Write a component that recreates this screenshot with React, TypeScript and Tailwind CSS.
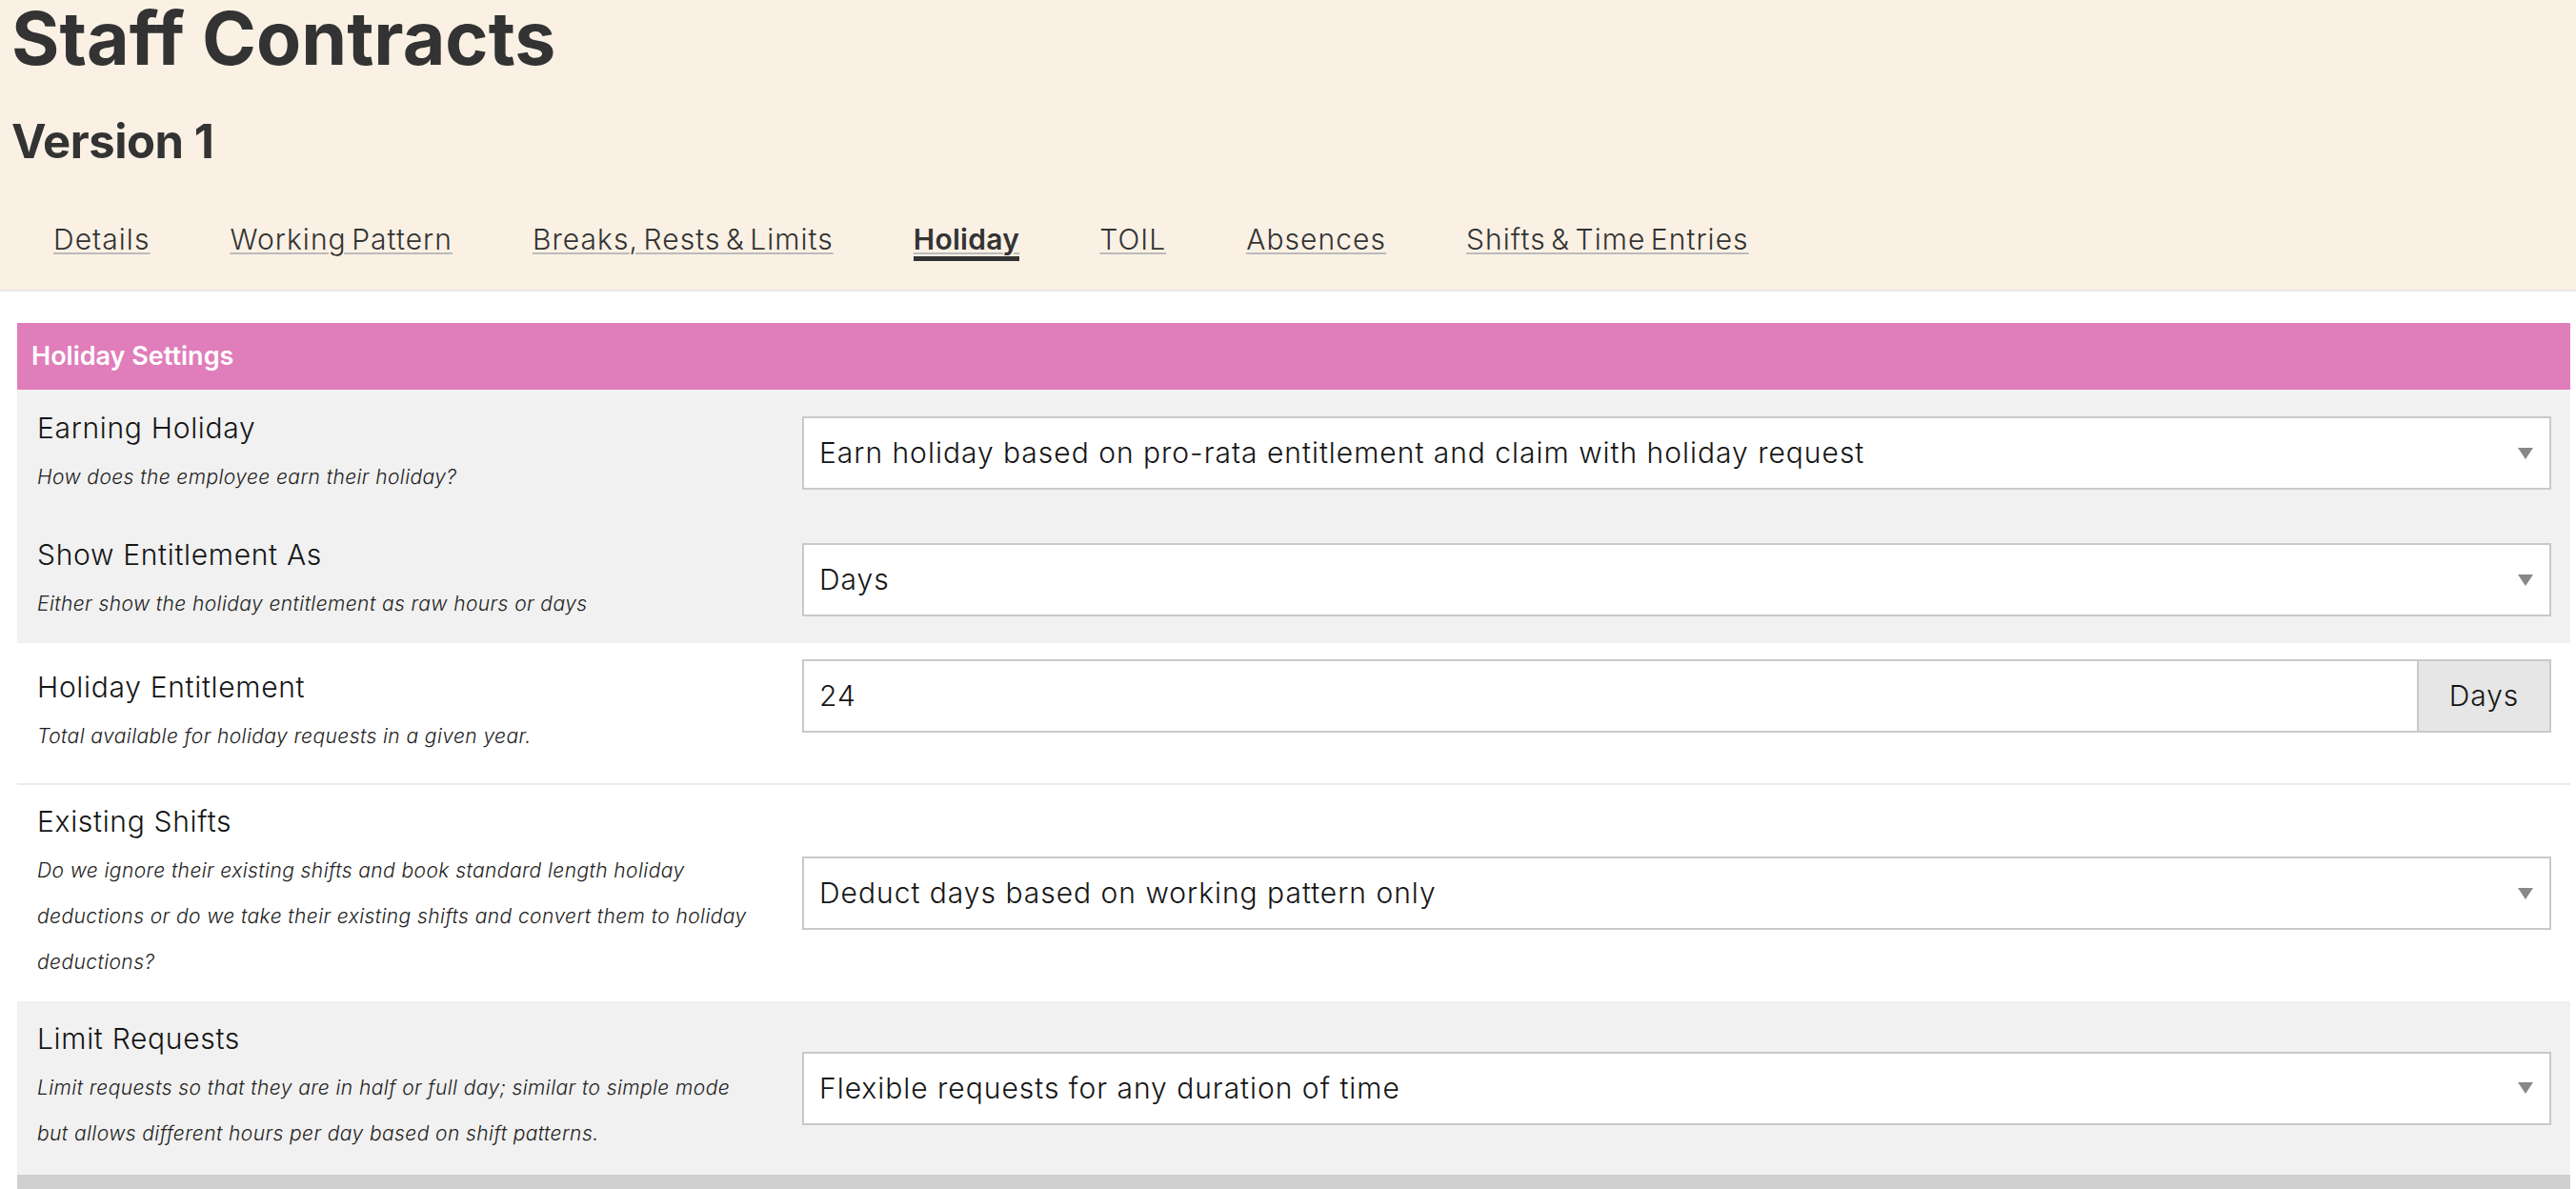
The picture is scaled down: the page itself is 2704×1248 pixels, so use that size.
import React from "react";

const tabs = [
  "Details",
  "Working Pattern",
  "Breaks, Rests & Limits",
  "Holiday",
  "TOIL",
  "Absences",
  "Shifts & Time Entries",
];

function Caret() {
  return (
    <svg width="16" height="12" viewBox="0 0 16 12" className="shrink-0">
      <path d="M0 0h16L8 12z" fill="#888" />
    </svg>
  );
}

function SelectBox({ value }: { value: string }) {
  return (
    <div className="flex h-[77px] w-full items-center justify-between border-2 border-[#c9c9c9] bg-white pl-[16px] pr-[17px] text-[30px] font-light tracking-[0.033em] text-[#151515]">
      <span>{value}</span>
      <Caret />
    </div>
  );
}

function FieldLabel({
  title,
  lines,
  className = "",
}: {
  title: string;
  lines: string[];
  className?: string;
}) {
  return (
    <div className={`w-[803px] shrink-0 ${className}`}>
      <div className="text-[30px] font-light leading-[40px] tracking-[0.023em] text-[#151515]">
        {title}
      </div>
      <div className="mt-[8px] text-[21px] font-light italic leading-[48px] tracking-[0.02em] text-[#222]">
        {lines.map((line) => (
          <div key={line} className="whitespace-nowrap">
            {line}
          </div>
        ))}
      </div>
    </div>
  );
}

export default function App() {
  return (
    <div className="min-h-screen bg-white font-['Inter',_sans-serif] text-[#333]">
      <header className="border-b-2 border-[#e8e8e8] bg-[#faf1e4] px-[12px] pb-[33px]">
        <h1 className="text-[77px] font-bold leading-[80px]">Staff Contracts</h1>
        <h2 className="mt-[40px] text-[49px] font-bold leading-[58px] tracking-[-0.01em]">
          Version 1
        </h2>
        <nav className="mt-[53px] ml-[2px] flex">
          {tabs.map((tab) => (
            <a
              key={tab}
              href="#"
              className="px-[42px] text-[30px] leading-[40px]"
            >
              <span
                className={
                  tab === "Holiday"
                    ? "border-b-[5px] border-[#333] font-semibold tracking-[0.01em] text-[#333] underline decoration-[#bbb] decoration-2 underline-offset-[3px]"
                    : "font-light tracking-[0.035em] [word-spacing:-4px] text-[#333] underline decoration-[#bbb] decoration-2 underline-offset-[3px]"
                }
              >
                {tab}
              </span>
            </a>
          ))}
        </nav>
      </header>

      <section className="ml-[18px] mr-[6px] mt-[33px]">
        <div className="flex h-[70px] items-center bg-[#e07dbb] px-[15px] text-[27px] font-semibold text-white">
          Holiday Settings
        </div>

        <div className="flex bg-[#f1f1f1] pl-[21px] pr-[20px]">
          <FieldLabel
            className="pt-[20px] pb-[17px]"
            title="Earning Holiday"
            lines={["How does the employee earn their holiday?"]}
          />
          <div className="flex-1 self-center">
            <SelectBox value="Earn holiday based on pro-rata entitlement and claim with holiday request" />
          </div>
        </div>

        <div className="flex bg-[#f1f1f1] pl-[21px] pr-[20px]">
          <FieldLabel
            className="pt-[20px] pb-[17px]"
            title="Show Entitlement As"
            lines={["Either show the holiday entitlement as raw hours or days"]}
          />
          <div className="flex-1 self-center">
            <SelectBox value="Days" />
          </div>
        </div>

        <div className="flex bg-white pl-[21px] pr-[20px]">
          <FieldLabel
            className="pt-[26px] pb-[25px]"
            title="Holiday Entitlement"
            lines={["Total available for holiday requests in a given year."]}
          />
          <div className="mt-[17px] flex h-[77px] flex-1 self-start border-2 border-[#c9c9c9] bg-white text-[30px] font-light tracking-[0.033em] text-[#151515]">
            <div className="flex flex-1 items-center pl-[16px]">24</div>
            <div className="flex w-[139px] items-center justify-center border-l-2 border-[#c9c9c9] bg-[#e6e6e6]">
              Days
            </div>
          </div>
        </div>

        <div className="flex border-t-2 border-[#ebebeb] bg-white pl-[21px] pr-[20px]">
          <FieldLabel
            className="pt-[18px] pb-[17px]"
            title="Existing Shifts"
            lines={[
              "Do we ignore their existing shifts and book standard length holiday",
              "deductions or do we take their existing shifts and convert them to holiday",
              "deductions?",
            ]}
          />
          <div className="flex-1 self-center">
            <SelectBox value="Deduct days based on working pattern only" />
          </div>
        </div>

        <div className="flex bg-[#f1f1f1] pl-[21px] pr-[20px]">
          <FieldLabel
            className="pt-[19px] pb-[19px]"
            title="Limit Requests"
            lines={[
              "Limit requests so that they are in half or full day; similar to simple mode",
              "but allows different hours per day based on shift patterns.",
            ]}
          />
          <div className="flex-1 self-center">
            <SelectBox value="Flexible requests for any duration of time" />
          </div>
        </div>

        <div className="h-[70px] bg-[#cfcfcf]" />
      </section>
    </div>
  );
}
